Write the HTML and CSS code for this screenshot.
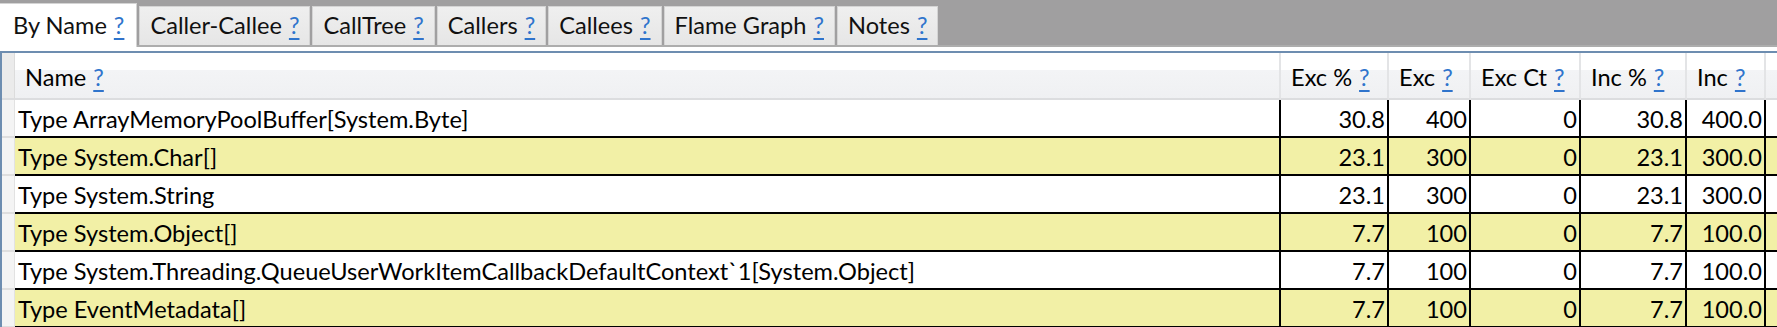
FILE: index.html
```html
<!DOCTYPE html>
<html lang="en">
<head>
    <meta charset="UTF-8">
    <title>By Name</title>
    <link rel="stylesheet" href="styles.css">
</head>
<body>
    <!-- Tabs -->
    <div class="tabstrip">
        <div class="tab selected">By Name <a class="help">?</a></div>
        <div class="tab">Caller-Callee <a class="help">?</a></div>
        <div class="tab">CallTree <a class="help">?</a></div>
        <div class="tab">Callers <a class="help">?</a></div>
        <div class="tab">Callees <a class="help">?</a></div>
        <div class="tab">Flame Graph <a class="help">?</a></div>
        <div class="tab">Notes <a class="help">?</a></div>
    </div>

    <!-- Grid -->
    <div class="panel">
        <div class="grid">
            <div class="row header">
                <div class="cell corner"></div>
                <div class="cell">Name <a class="help">?</a></div>
                <div class="cell">Exc % <a class="help">?</a></div>
                <div class="cell">Exc <a class="help">?</a></div>
                <div class="cell">Exc Ct <a class="help">?</a></div>
                <div class="cell">Inc % <a class="help">?</a></div>
                <div class="cell">Inc <a class="help">?</a></div>
                <div class="cell"></div>
            </div>

            <div class="row">
                <div class="cell rowhead"></div>
                <div class="cell name">Type ArrayMemoryPoolBuffer[System.Byte]</div>
                <div class="cell num">30.8</div>
                <div class="cell num">400</div>
                <div class="cell num">0</div>
                <div class="cell num">30.8</div>
                <div class="cell num">400.0</div>
                <div class="cell num"></div>
            </div>
            <div class="row hl">
                <div class="cell rowhead"></div>
                <div class="cell name">Type System.Char[]</div>
                <div class="cell num">23.1</div>
                <div class="cell num">300</div>
                <div class="cell num">0</div>
                <div class="cell num">23.1</div>
                <div class="cell num">300.0</div>
                <div class="cell num"></div>
            </div>
            <div class="row">
                <div class="cell rowhead"></div>
                <div class="cell name">Type System.String</div>
                <div class="cell num">23.1</div>
                <div class="cell num">300</div>
                <div class="cell num">0</div>
                <div class="cell num">23.1</div>
                <div class="cell num">300.0</div>
                <div class="cell num"></div>
            </div>
            <div class="row hl">
                <div class="cell rowhead"></div>
                <div class="cell name">Type System.Object[]</div>
                <div class="cell num">7.7</div>
                <div class="cell num">100</div>
                <div class="cell num">0</div>
                <div class="cell num">7.7</div>
                <div class="cell num">100.0</div>
                <div class="cell num"></div>
            </div>
            <div class="row">
                <div class="cell rowhead"></div>
                <div class="cell name">Type System.Threading.QueueUserWorkItemCallbackDefaultContext`1[System.Object]</div>
                <div class="cell num">7.7</div>
                <div class="cell num">100</div>
                <div class="cell num">0</div>
                <div class="cell num">7.7</div>
                <div class="cell num">100.0</div>
                <div class="cell num"></div>
            </div>
            <div class="row hl">
                <div class="cell rowhead"></div>
                <div class="cell name">Type EventMetadata[]</div>
                <div class="cell num">7.7</div>
                <div class="cell num">100</div>
                <div class="cell num">0</div>
                <div class="cell num">7.7</div>
                <div class="cell num">100.0</div>
                <div class="cell num"></div>
            </div>
        </div>
    </div>
</body>
</html>
```

FILE: styles.css
```css
body {
    margin: 0;
    width: 1777px;
    height: 327px;
    overflow: hidden;
    background-color: white;
    font-family: Lato, "Open Sans", sans-serif;
    font-size: 23.6px;
    color: #000;
}

.help {
    color: #2f74cc; /* link blue */
    text-decoration: underline;
    text-underline-offset: 4px;
    cursor: pointer;
}

/* Tab strip */
.tabstrip {
    display: flex;
    align-items: flex-end;
    gap: 2px;
    height: 45px;
    padding-bottom: 2px;
    background: linear-gradient(to top, #adadad 2px, #a09fa0 2px);
}
.tab {
    display: flex;
    align-items: center;
    gap: 7px;
    height: 39px;
    padding: 0 10px 3px 10px;
    box-sizing: border-box;
    border: 1px solid #d4d4d4;
    border-bottom: none;
    background: linear-gradient(#efefef, #e6e6e6);
    color: #111;
}
.tab.selected {
    height: 44px;
    margin-bottom: -2px;
    padding: 3px 12px 5px 13px;
    border-left: none;
    background: white;
}

/* Data grid */
.panel {
    padding-top: 4px;
    background: white;
}
.grid {
    border-left: 2px solid #6d8db0;
    border-top: 2px solid #6d8db0;
}
.row {
    display: grid;
    grid-template-columns: 13px 1266px 108px 82px 110px 106px 79px 80px;
    height: 38px;
}
.row.hl {
    background-color: #f2f0a6; /* highlighted rows */
}
.cell {
    display: flex;
    align-items: center;
    padding: 2px 3px 0 3px;
    box-sizing: border-box;
    border-right: 2px solid #000;
    border-bottom: 2px solid #000;
    white-space: nowrap;
    overflow: hidden;
}
.cell.num {
    justify-content: flex-end;
    padding-right: 2px;
}
.cell.rowhead {
    background-color: #f4f4f4;
    border-right: 1px solid #e2e2e2;
    border-bottom: 2px solid #dedede;
}

.row.header {
    height: 47px;
    background: linear-gradient(#ffffff 0, #ffffff 36%, #f3f4f6 36%, #eff0f2 100%);
}
.row.header .cell {
    gap: 7px;
    padding: 3px 0 0 10px;
    border-right: 2px solid #e3e4e6;
    border-bottom: 2px solid #dcdddf;
}
.row.header .cell.corner {
    padding: 0;
    background-color: #ebebeb;
    border-right: 1px solid #dcdcdc;
}
```
